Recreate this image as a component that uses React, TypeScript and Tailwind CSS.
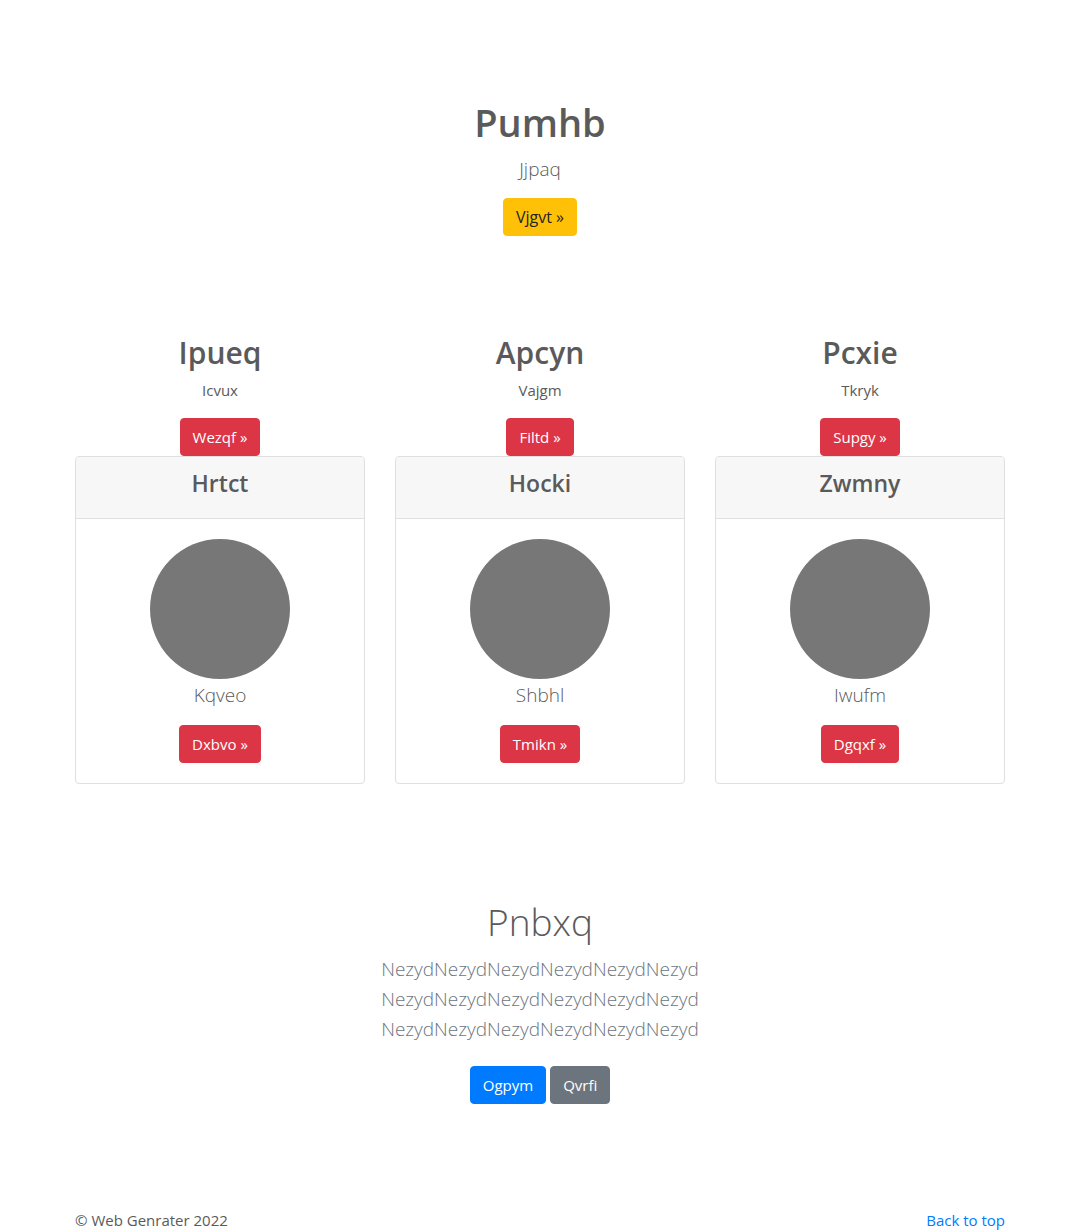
import React from "react";

const columns = [
  { title: "Ipueq", text: "Icvux", action: "Wezqf »", card: "Hrtct", lead: "Kqveo", cardAction: "Dxbvo »" },
  { title: "Apcyn", text: "Vajgm", action: "Filtd »", card: "Hocki", lead: "Shbhl", cardAction: "Tmikn »" },
  { title: "Pcxie", text: "Tkryk", action: "Supgy »", card: "Zwmny", lead: "Iwufm", cardAction: "Dgqxf »" },
];

const button = "inline-block rounded-[4px] border px-3 py-1.5 leading-6 align-top";
const danger = "border-[#dc3545] bg-[#dc3545] text-[15px] text-white";

export default function App() {
  return (
    <div className="font-['Open_Sans','Noto_Sans',sans-serif] text-[15px] leading-6 text-[#5a5a5a]">
      <main className="mx-auto max-w-[960px] px-[15px]">
        <section className="pt-[98px] pb-24 text-center">
          <h1 className="mb-2 text-[38px] leading-12 font-semibold">Pumhb</h1>
          <p className="mb-[14px] text-[19px] leading-[30px] font-light">Jjpaq</p>
          <button type="button" className={`${button} border-[#ffc107] bg-[#ffc107] text-base text-[#212529]`}>Vjgvt »</button>
        </section>

        <section className="grid grid-cols-3 gap-x-[30px] text-center">
          {columns.map((c) => (
            <div key={c.title}>
              <h2 className="mb-1 text-[30px] leading-[42px] font-semibold">{c.title}</h2>
              <p className="mb-4">{c.text}</p>
              <button type="button" className={`${button} ${danger}`}>{c.action}</button>
              <article className="rounded-[4px] border border-[#dfdfdf] bg-white">
                <header className="rounded-t-[3px] border-b border-[#dfdfdf] bg-[#f7f7f7] px-5 py-3">
                  <h3 className="mb-2 text-[23px] leading-[29px] font-semibold">{c.card}</h3>
                </header>
                <div className="p-5">
                  <div className="mx-auto size-[140px] rounded-full bg-[#777777]" />
                  <p className="mb-[14px] text-[19px] leading-8 font-light">{c.lead}</p>
                  <button type="button" className={`${button} ${danger}`}>{c.cardAction}</button>
                </div>
              </article>
            </div>
          ))}
        </section>

        <section className="pt-[114px] pb-24 text-center">
          <h2 className="mb-2 text-[37px] leading-12 font-light">Pnbxq</h2>
          <p className="mb-[22px] text-[19px] leading-[30px] font-light text-[#6c757d]">
            NezydNezydNezydNezydNezydNezyd
            <br />
            NezydNezydNezydNezydNezydNezyd
            <br />
            NezydNezydNezydNezydNezydNezyd
          </p>
          <div className="flex justify-center gap-1">
            <button type="button" className={`${button} border-[#007bff] bg-[#007bff] text-[15px] text-white`}>Ogpym</button>
            <button type="button" className={`${button} border-[#6c757d] bg-[#6c757d] text-[15px] text-white`}>Qvrfi</button>
          </div>
        </section>

        <footer className="flex justify-between pt-2">
          <p>© Web Genrater 2022</p>
          <a href="#" className="text-[#007bff]">Back to top</a>
        </footer>
      </main>
    </div>
  );
}
